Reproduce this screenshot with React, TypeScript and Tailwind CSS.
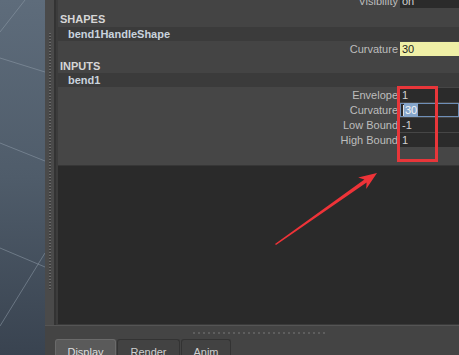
const font = { fontFamily: '"Liberation Sans", Arial, sans-serif' };

function AttrRow({
  label,
  value,
  h = 'h-[15px]',
  yellow,
  selected,
}: {
  label: string;
  value: string;
  h?: string;
  yellow?: boolean;
  selected?: boolean;
}) {
  return (
    <div className={`flex items-start ${h}`}>
      <div className="flex-1 overflow-hidden whitespace-nowrap text-right pr-[2px] text-[11px] leading-[14px] text-[#bdbdbd]">
        {label}
      </div>
      <div
        className={
          'w-[59px] h-[14px] shrink-0 flex items-center pl-[2px] text-[11px] leading-[14px] ' +
          (yellow
            ? 'bg-[#efefa6] text-[#1e1e1e]'
            : selected
              ? 'bg-[#2b2b2b] border border-[#6f8fb8] pl-[1px] text-[#e8e8e8]'
              : 'bg-[#2b2b2b] text-[#d2d2d2]')
        }
      >
        {selected ? (
          <>
            <span className="w-px h-[11px] bg-[#e0e0e0]" />
            <span className="bg-[#86a6cc] text-[#f4f4f4] px-[1px]">{value}</span>
          </>
        ) : (
          value
        )}
      </div>
    </div>
  );
}

export default function App() {
  return (
    <div className="relative w-[459px] h-[355px] overflow-hidden flex bg-[#444444]" style={font}>
      {/* viewport */}
      <div className="w-[45px] h-full shrink-0 bg-[linear-gradient(to_bottom,#5e6c7b,#4f5c6a_50%,#394350)]">
        <svg width="45" height="355" className="block">
          <g stroke="#8e9aa8" strokeOpacity="0.55" strokeWidth="1" fill="none">
            <line x1="25" y1="0" x2="0" y2="32" />
            <line x1="0" y1="58" x2="45" y2="72" />
            <line x1="0" y1="143" x2="45" y2="161" />
            <line x1="0" y1="248" x2="45" y2="267" />
            <line x1="45" y1="253" x2="0" y2="326" />
          </g>
        </svg>
      </div>

      <div className="flex-1 flex flex-col">
        <div className="h-[325px] flex">
          {/* splitter */}
          <div className="w-[9px] bg-[#4a4a4a] flex justify-center">
            <div className="mt-[33px] w-[2px] h-[257px] bg-[repeating-linear-gradient(to_bottom,#6a6a6a_0_1px,#3a3a3a_1px_2px,transparent_2px_3px)]" />
          </div>
          <div className="w-[2px] bg-[#333333]" />
          <div className="w-[2px] bg-[#3c3c3c]" />

          {/* attribute panel */}
          <div className="flex-1 flex flex-col overflow-hidden bg-[#444444]">
            <div className="-mt-[6px]">
              <AttrRow label="Visibility" value="on" />
            </div>
            <div className="h-[18px] pt-[3px] pl-[2px] flex items-center text-[11px] font-bold text-[#d6d6d6]">
              SHAPES
            </div>
            <div className="h-[14px] pl-[10px] flex items-center bg-[#3b3b3b] text-[11px] font-bold text-[#c9d3de]">
              bend1HandleShape
            </div>
            <div className="h-[16px] pt-[1px]">
              <AttrRow label="Curvature" value="30" h="h-[15px]" yellow />
            </div>
            <div className="h-[16px] pt-[2px] pl-[2px] flex items-center text-[11px] font-bold text-[#d6d6d6]">
              INPUTS
            </div>
            <div className="h-[14px] pl-[10px] flex items-center bg-[#3b3b3b] text-[11px] font-bold text-[#c9d3de]">
              bend1
            </div>
            <div className="h-[79px] pt-[1px] bg-[#464646] border-b border-[#363636]">
              <AttrRow label="Envelope" value="1" />
              <AttrRow label="Curvature" value="30" selected />
              <AttrRow label="Low Bound" value="-1" />
              <AttrRow label="High Bound" value="1" />
            </div>
            <div className="flex-1 bg-[#2a2a2a] border-b border-[#3a3a3a]" />
          </div>
        </div>

        {/* bottom bar */}
        <div className="h-[30px] border-t border-[#555555] bg-[#444444]">
          <div className="mt-[6px] ml-[148px] w-[134px] h-[2px] bg-[repeating-linear-gradient(to_right,#5e5e5e_0_2px,transparent_2px_5px)]" />
          <div className="mt-[5px] ml-[10px] flex gap-[1px] text-[11px] leading-[13px]">
            <div className="w-[61px] h-[22px] pt-[6px] text-center rounded-t-[3px] border border-b-0 border-[#6a6a6a] bg-[#5a5a5a] text-[#dedede]">
              Display
            </div>
            <div className="w-[63px] h-[22px] pt-[6px] text-center rounded-t-[3px] border border-b-0 border-[#333333] bg-[#424242] text-[#cfcfcf]">
              Render
            </div>
            <div className="w-[50px] h-[22px] pt-[6px] text-center rounded-t-[3px] border border-b-0 border-[#333333] bg-[#424242] text-[#cfcfcf]">
              Anim
            </div>
          </div>
        </div>
      </div>

      {/* red annotation */}
      <div className="absolute left-[397px] top-[86px] w-[41px] h-[76px] border-[3px] border-[#e8363a]" />
      <svg className="absolute left-0 top-0 pointer-events-none" width="459" height="355">
        <polygon
          points="275,244 364.4,179.4 358.2,177.6 377,173 366.2,189 366.6,182.6 276,245"
          fill="#ee3338"
        />
      </svg>
    </div>
  );
}
